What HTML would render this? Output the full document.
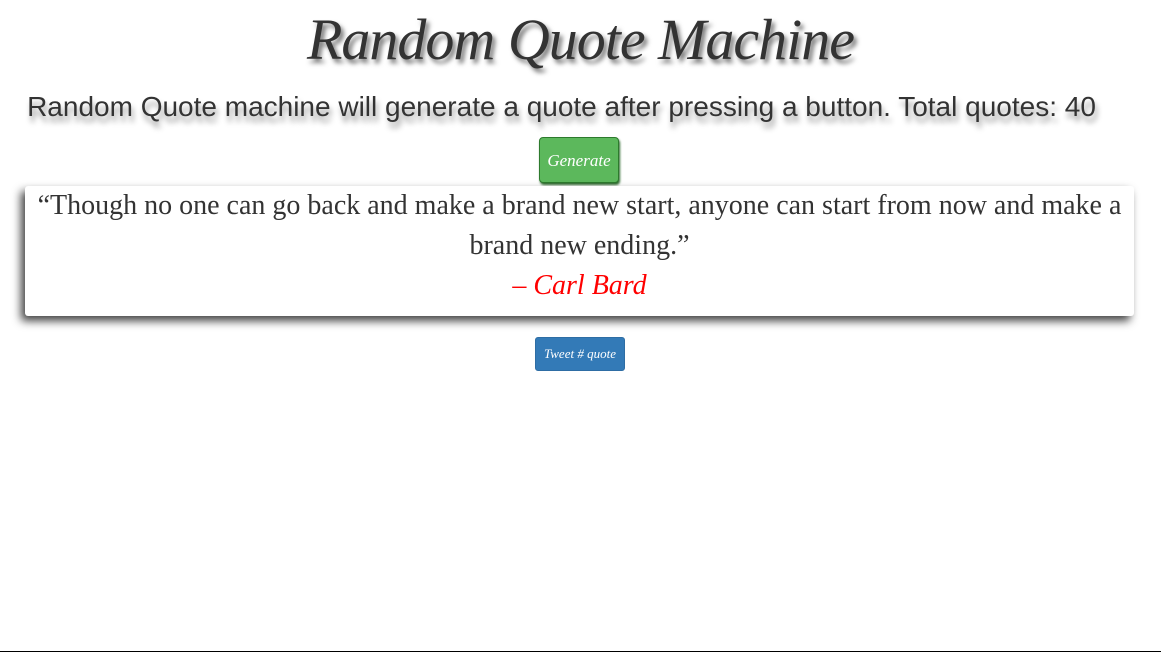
<!DOCTYPE html>
<html><head><meta charset="utf-8"><style>
html,body{margin:0;padding:0;background:#fff;width:1161px;height:653px;overflow:hidden;position:relative}
.title{position:absolute;top:6px;left:0;width:1161px;text-align:center;font-family:"Liberation Serif",serif;font-style:italic;font-size:58px;color:#333;text-shadow:3px 4px 5px #777;letter-spacing:-1px}
.sub{position:absolute;top:91px;left:0;width:1123px;text-align:center;font-family:"Liberation Sans",sans-serif;font-size:28px;color:#333;text-shadow:2px 6px 6px #999}
.gen{position:absolute;left:539px;top:137px;width:80px;height:46px;background:#5cb85c;border:1px solid #2d7a2d;border-radius:4px;box-shadow:1px 2px 2px #2d6a2d;color:#fff;font-family:"Liberation Serif",serif;font-style:italic;font-size:17px;text-align:center;line-height:46px;box-sizing:border-box}
.card{position:absolute;left:25px;top:186px;width:1109px;height:130px;background:#fff;border-radius:3px;box-shadow:-4px 5px 9px #444;font-family:"Liberation Serif",serif;font-size:28px;color:#333;text-align:center;line-height:40px;box-sizing:border-box;padding:0 4px}
.auth{color:#f00;font-style:italic}
.tw{position:absolute;left:535px;top:337px;width:90px;height:34px;background:#337ab7;border:1px solid #2e6da4;border-radius:3px;color:#fff;font-family:"Liberation Serif",serif;font-style:italic;font-size:13px;text-align:center;line-height:32px;box-sizing:border-box}
.line{position:absolute;left:0;top:651px;width:1161px;height:1px;background:#000}
</style></head><body>
<div class="title">Random Quote Machine</div>
<div class="sub">Random Quote machine will generate a quote after pressing a button. Total quotes: 40</div>
<div class="gen">Generate</div>
<div class="card">“Though no one can go back and make a brand new start, anyone can start from now and make a brand new ending.”<br><span class="auth">– Carl Bard</span></div>
<div class="tw">Tweet # quote</div>
<div class="line"></div>
</body></html>
